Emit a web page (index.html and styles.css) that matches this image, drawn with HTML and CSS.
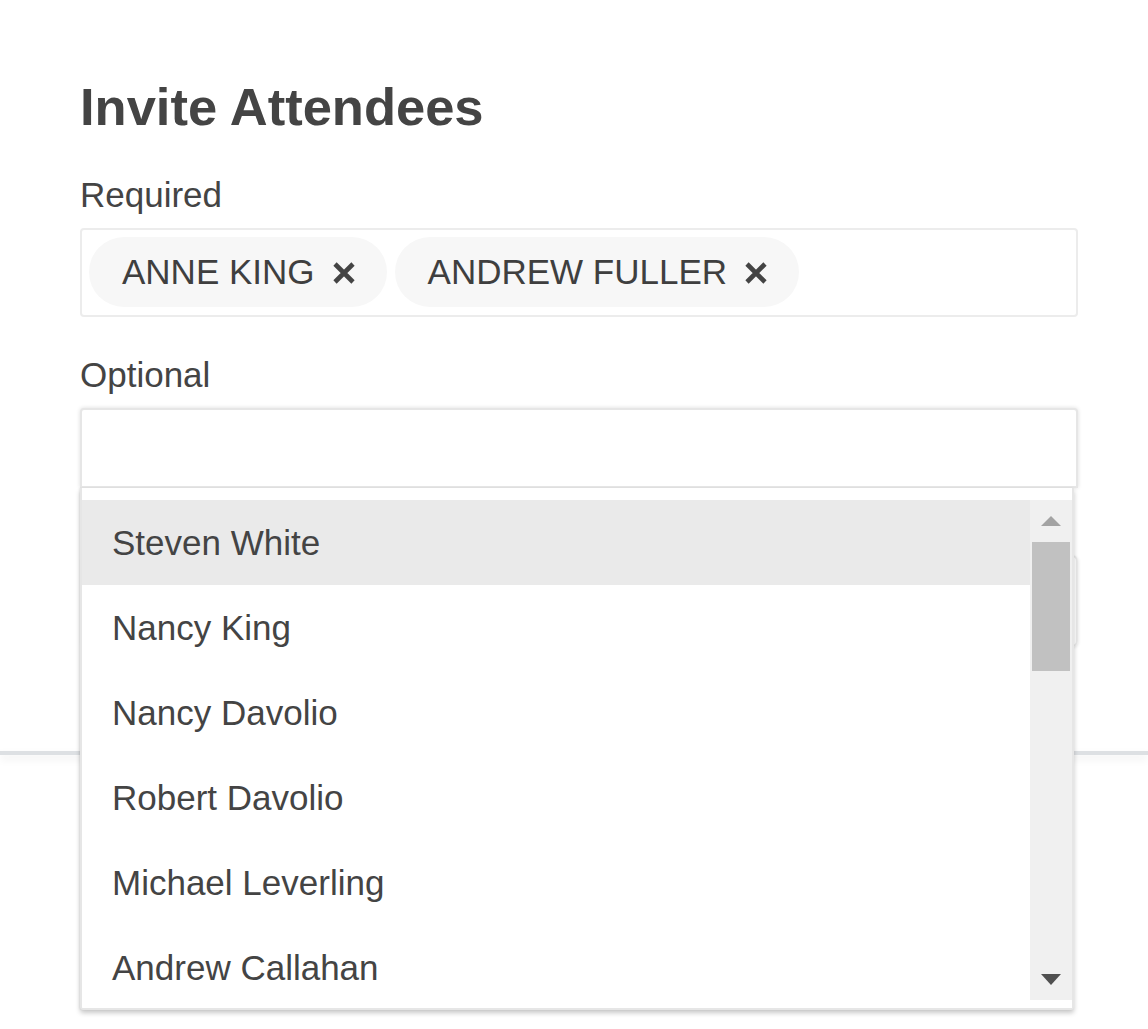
FILE: index.html
```html
<!DOCTYPE html>
<html lang="en">
<head>
<meta charset="utf-8">
<title>Invite Attendees</title>
<link rel="stylesheet" href="styles.css">
</head>
<body>
<div class="page">
  <div class="content">
    <h1 class="title">Invite Attendees</h1>
    <div class="label">Required</div>
    <div class="tagbox">
      <span class="chip">
        <span class="chip-text">ANNE KING</span>
        <svg class="chip-close" viewBox="0 0 26 26"><path d="M4 4 L22 22 M22 4 L4 22"/></svg>
      </span>
      <span class="chip">
        <span class="chip-text">ANDREW FULLER</span>
        <svg class="chip-close" viewBox="0 0 26 26"><path d="M4 4 L22 22 M22 4 L4 22"/></svg>
      </span>
    </div>
    <div class="label label-gap">Optional</div>
    <div class="field">
      <div class="inputbox"></div>
      <div class="popup">
        <div class="popup-body">
          <ul class="list">
            <li class="item active">Steven White</li>
            <li class="item">Nancy King</li>
            <li class="item">Nancy Davolio</li>
            <li class="item">Robert Davolio</li>
            <li class="item">Michael Leverling</li>
            <li class="item">Andrew Callahan</li>
          </ul>
          <div class="scrollbar">
            <div class="sb-btn"><span class="arrow-up"></span></div>
            <div class="sb-thumb"></div>
            <div class="sb-track"></div>
            <div class="sb-btn"><span class="arrow-down"></span></div>
          </div>
        </div>
      </div>
    </div>
    <div class="hidden-box"></div>
  </div>
  <div class="footer-line"></div>
</div>
</body>
</html>
```
FILE: styles.css
```css
html, body {
  margin: 0;
  padding: 0;
  background: #ffffff;
}

body {
  font-family: "Liberation Sans", Arial, sans-serif;
  color: #444444;
  min-height: 1029px;
}

.page {
  width: 1148px;
  min-height: 1029px;
}

.content {
  padding: 77px 70px 0 80px;
}

.title {
  margin: 0;
  font-size: 52.5px;
  line-height: 60px;
  font-weight: bold;
  color: #444444;
}

.label {
  margin-top: 38px;
  font-size: 35px;
  line-height: 40px;
  color: #444444;
}

.tagbox {
  margin-top: 13px;
  border: 2px solid #ececec;
  border-radius: 4px;
  padding: 7px 7px 8px 7px;
  display: flex;
  gap: 8px;
  height: 70px;
}

.chip {
  display: flex;
  align-items: center;
  height: 70px;
  padding: 0 30px 0 33px;
  border-radius: 35px;
  background: #f7f7f7;
  font-size: 35px;
  line-height: 70px;
  color: #3f3f3f;
}

.chip-close {
  width: 26px;
  height: 26px;
  margin-left: 16px;
  margin-top: 2px;
  fill: none;
  stroke: #444444;
  stroke-width: 4.6;
}

.field {
  position: relative;
  margin-top: 13px;
}

.inputbox {
  height: 76px;
  border: 2px solid #e6e6e6;
  border-radius: 4px 4px 0 0;
  box-shadow: 0 0 4px rgba(0, 0, 0, 0.14);
  background: #ffffff;
}

.popup {
  position: absolute;
  z-index: 10;
  top: 80px;
  left: 0;
  width: 990px;
  border: 2px solid #e6e6e6;
  border-top: 0;
  padding: 12px 0 8px 0;
  background: #ffffff;
  box-shadow: 0 3px 5px rgba(0, 0, 0, 0.22), -1px 0 2px rgba(0, 0, 0, 0.06);
  border-radius: 0 0 3px 3px;
}

.popup-body {
  display: flex;
  height: 500px;
  overflow: hidden;
}

.list {
  list-style: none;
  margin: 0;
  padding: 0;
  flex: 1;
}

.item {
  height: 85px;
  line-height: 85px;
  padding-left: 30px;
  font-size: 35px;
  color: #444444;
}

.item.active {
  background: #eaeaea;
}

.scrollbar {
  width: 42px;
  background: #f0f0f0;
  display: flex;
  flex-direction: column;
}

.sb-btn {
  height: 42px;
  display: flex;
  align-items: center;
  justify-content: center;
}

.arrow-up {
  width: 0;
  height: 0;
  border-left: 10px solid transparent;
  border-right: 10px solid transparent;
  border-bottom: 10px solid #a3a3a3;
}

.arrow-down {
  width: 0;
  height: 0;
  border-left: 10px solid transparent;
  border-right: 10px solid transparent;
  border-top: 11px solid #505050;
}

.sb-thumb {
  height: 129px;
  margin: 0 2px;
  background: #c1c1c1;
}

.sb-track {
  flex: 1;
}

.hidden-box {
  margin-top: 67px;
  height: 88px;
  border: 2px solid #eaeaea;
  border-radius: 6px;
  box-shadow: 1px 1px 3px rgba(0, 0, 0, 0.08);
}

.footer-line {
  margin-top: 104px;
  height: 4px;
  background: #dde0e3;
  box-shadow: 0 4px 8px rgba(0, 0, 0, 0.08);
}
```
